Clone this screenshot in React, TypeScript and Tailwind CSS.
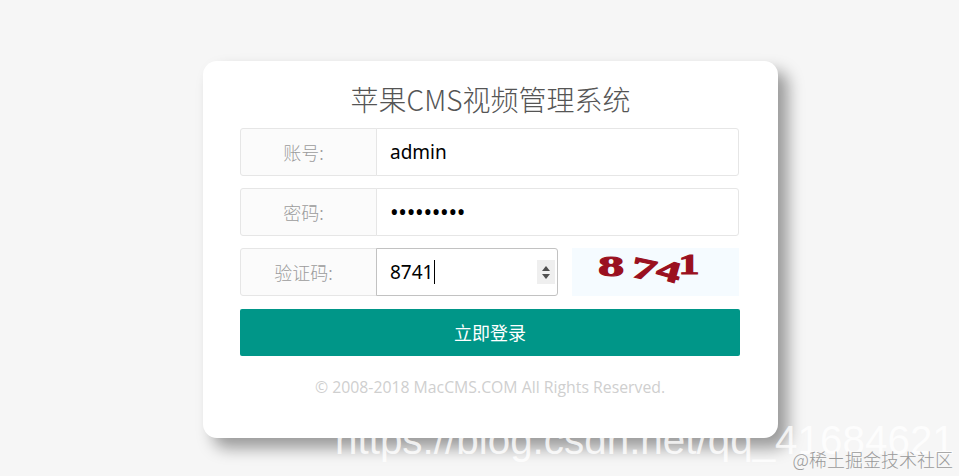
import React from "react";

const cjk = "font-['Microsoft_YaHei','Noto_Sans_CJK_SC','Noto_Sans',sans-serif]";

function Label({ text }: { text: string }) {
  return (
    <div className="flex h-12 w-[137px] shrink-0 items-center justify-center rounded-l-[3px] border border-[#e6e6e6] bg-[#fbfbfb] pr-[10px] text-[18px] font-light text-[#9c9c9c]">
      {text}
    </div>
  );
}

function Row({ label, children }: { label: string; children: React.ReactNode }) {
  return (
    <div className="flex h-12 w-[499px]">
      <Label text={label} />
      <div className="-ml-px flex flex-1 items-center rounded-r-[3px] border border-[#e6e6e6] bg-white pl-[13px] font-['Noto_Sans',sans-serif] text-[19px] text-black">
        {children}
      </div>
    </div>
  );
}

export default function App() {
  return (
    <div className={`relative h-[476px] w-[959px] overflow-hidden bg-[#f6f6f6] pl-[203px] pt-[61px] ${cjk}`}>
      <div className="h-[377px] w-[575px] rounded-[14px] bg-white px-[37px] pt-[16px] shadow-[10px_10px_16px_rgba(0,0,0,0.38)]">
        <h1 className="h-[51px] text-center text-[28px] leading-[44px] font-light text-[#555555]">苹果CMS视频管理系统</h1>
        <div className="flex flex-col gap-3">
          <Row label="账号:">admin</Row>
          <Row label="密码:">
            <span className="text-[23px] tracking-[-0.3px]">•••••••••</span>
          </Row>
          <div className="flex h-12 w-[499px] items-stretch">
            <Label text="验证码:" />
            <div className="-ml-px flex w-[182px] items-center rounded-r-[3px] border border-[#c2c2c2] bg-white pl-[13px] pr-[2px] font-['Noto_Sans',sans-serif] text-[19px] text-black">
              <span>8741</span>
              <span className="ml-px h-[24px] w-px bg-black" />
              <span className="ml-auto flex h-6 w-[18px] flex-col items-center justify-center gap-[3px] bg-[#efefef]">
                <span className="h-0 w-0 border-x-[4px] border-b-[5px] border-x-transparent border-b-[#505050]" />
                <span className="h-0 w-0 border-x-[4px] border-t-[5px] border-x-transparent border-t-[#505050]" />
              </span>
            </div>
            <div className="ml-[14px] flex h-12 w-[167px] items-start bg-[#f5fbff] pl-[25px] font-['Liberation_Serif',serif] text-[30px] leading-[32px] font-bold text-[#9a1020] [-webkit-text-stroke:1px_#9a1020]">
              <span className="mt-[2px] w-[28px] scale-x-[1.75] text-center">8</span>
              <span className="ml-[7px] mt-[5px] w-[24px] rotate-[12deg] scale-x-[1.7] text-center">7</span>
              <span className="ml-[1px] mt-[7px] w-[24px] rotate-[16deg] scale-x-[1.6] text-center">4</span>
              <span className="ml-[-1px] mt-[0px] w-[18px] scale-x-[1.4] text-center">1</span>
            </div>
          </div>
          <button className="mt-[1px] h-[47px] w-[500px] rounded-[2px] bg-[#009688] text-[18px] text-white">立即登录</button>
        </div>
        <p className="mt-[19px] w-[500px] text-center font-['Open_Sans',sans-serif] text-[15.8px] leading-[24px] text-[#cfcfcf]">
          © 2008-2018 MacCMS.COM All Rights Reserved.
        </p>
      </div>
      <div className="absolute left-[335px] top-[417px] whitespace-nowrap font-['Liberation_Sans',sans-serif] text-[40.4px] leading-[46px] text-white opacity-80">
        https://blog.csdn.net/qq_41684621
      </div>
      <div className="absolute right-[6px] top-[448px] whitespace-nowrap font-['Noto_Sans_CJK_SC',sans-serif] text-[18px] leading-[22px] font-light text-[#9a9a9a]">
        @稀土掘金技术社区
      </div>
    </div>
  );
}
